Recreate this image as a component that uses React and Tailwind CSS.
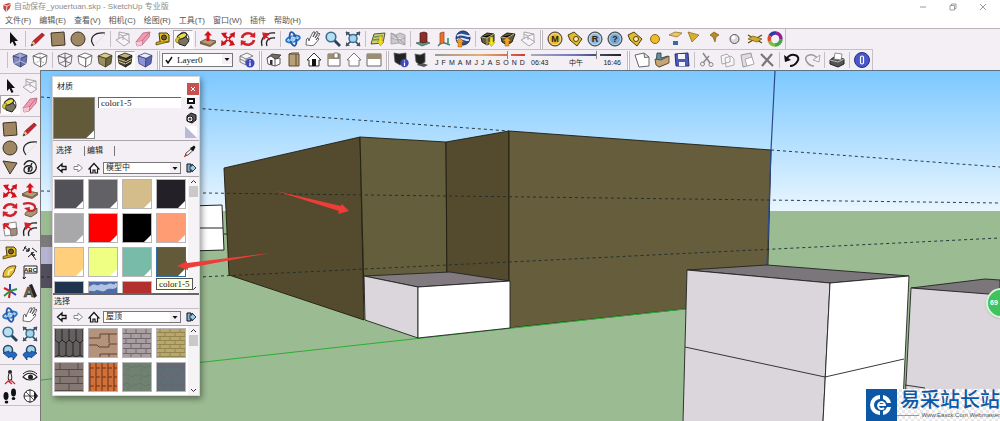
import React, { useState } from 'react';

const cube = (top, left, right, stroke = '#444') => (
  <g stroke={stroke} strokeWidth="0.8" strokeLinejoin="round">
    <path d="M3 6L10 3L17 5.500L11 8.500Z" fill={top} />
    <path d="M3 6L11 8.500L10.500 17L4 13.500Z" fill={left} />
    <path d="M11 8.500L17 5.500L16 13.500L10.500 17Z" fill={right} />
  </g>
);

const coin = (fill, letter) => (
  <>
    <circle cx="10" cy="10" r="7" fill={fill} stroke="#3b3a35" />
    <circle cx="10" cy="10" r="5.500" fill="none" stroke="#fff" strokeOpacity="0.5" />
    <text x="10" y="13" textAnchor="middle" fontSize="9" fontWeight="bold" fill="#2a2410">{letter}</text>
  </>
);

const icons = {
  select: <path d="M7 3V15L9.500 12.500L11.500 17L13.500 16L11.500 12H15Z" fill="#111" />,
  pencil: (
    <>
      <path d="M3 17L5 12L14 4L16.500 6L7.500 15Z" fill="#c4242b" stroke="#6d1418" strokeWidth="0.6" />
      <path d="M3 17L5 12L7.500 15Z" fill="#e8c99a" />
      <path d="M3 17L4 14.700L5.300 16Z" fill="#111" />
    </>
  ),
  rect: <path d="M3 4L16 3L17 16L4 17Z" fill="#a08763" stroke="#3d3222" />,
  circle: <circle cx="10" cy="10" r="7" fill="#a08763" stroke="#3d3222" />,
  triangle: <path d="M3 4L17 6L10 17Z" fill="#a08763" stroke="#3d3222" />,
  arc: (
    <>
      <path d="M6 17C0 9 6 3 17 4" fill="none" stroke="#222" strokeWidth="1.200" />
      <path d="M6 17L17 5" stroke="#bbb" strokeDasharray="1 2" />
    </>
  ),
  freehand: <path d="M4 8C8 0 18 5 16 12C14 18 4 18 4 13C4 8 13 7 12 12C11 16 7 14 9 10M12 6L8 15" fill="none" stroke="#222" strokeWidth="1.300" />,
  component: (
    <g fill="#f6f4f6" stroke="#aaa5aa">
      <path d="M6 3L16 5V13L6 11Z" />
      <path d="M3 11L9 8L17 13L11 17Z" />
      <path d="M6 5L10 7L16 5M10 7V11" />
    </g>
  ),
  eraser: (
    <>
      <path d="M3 13L10 4L17 3L16 8L9 16L4 17Z" fill="#ef9bb0" stroke="#b5637c" strokeWidth="0.8" />
      <path d="M3 13L9 12L16 3.500M9 12V16" fill="none" stroke="#b5637c" strokeWidth="0.8" />
      <path d="M3 13L9 12V16L4 17Z" fill="#f8c6d2" />
    </>
  ),
  tape: (
    <>
      <path d="M6 4H14L16 6V13H7Z" fill="#e3bc25" stroke="#4c3d0c" />
      <circle cx="11" cy="8.500" r="2.500" fill="#6d5e32" stroke="#222" />
      <path d="M15 13L3 16V13.500L8 12" fill="#c9a41f" stroke="#4c3d0c" strokeWidth="0.7" />
    </>
  ),
  paint: (
    <>
      <path d="M5 9L11 5L16 12L12 17L6 15Z" fill="#77755e" stroke="#222" />
      <ellipse cx="9" cy="7" rx="5" ry="2.500" transform="rotate(-25 9 7)" fill="#e9dc4e" stroke="#222" />
      <path d="M5 8C2 9 2 13 4 14C6 14 5 11 7 9Z" fill="#d8c92a" stroke="#5b5414" strokeWidth="0.6" />
      <path d="M7 5C10 1 16 4 16 11" fill="none" stroke="#333" />
    </>
  ),
  pushpull: (
    <>
      <path d="M2 13L8 10L18 12L12 16.500Z" fill="#b69a71" stroke="#3d3222" strokeWidth="0.7" />
      <path d="M2 13L12 16.500V18L2 15ZM12 16.500L18 12V14L12 18Z" fill="#7b6544" />
      <path d="M10 2L14 6.500H11.500V12H8.500V6.500H6Z" fill="#d8121b" />
    </>
  ),
  move: (
    <>
      <path d="M5 5L15 15M15.500 5L5 15" stroke="#d0121b" strokeWidth="2.400" />
      <path d="M3 4L9 3.500L6.500 9ZM17 3L16.500 9L11.500 5ZM17 16L11 17L14 11ZM3 17L3.500 11L8.500 15Z" fill="#d0121b" />
      <path d="M9 9L11 11M11 9L9 11" stroke="#f4dede" strokeWidth="0.8" />
    </>
  ),
  rotate: (
    <g fill="none" stroke="#d0222b" strokeWidth="2.600">
      <path d="M4 9C5 4 11 3 15 6" />
      <path d="M16 11C15 16 9 17 5 14" />
      <path d="M12 7.500L17 8.500V3.500ZM8 12.500L3 11.500V16.500Z" fill="#d0222b" strokeWidth="0.5" />
    </g>
  ),
  followme: (
    <>
      <path d="M5 15C5 10 9 12 14 11L17 8V13L11 17Z" fill="#a99674" stroke="#443a28" strokeWidth="0.7" />
      <path d="M3 4C10 2 16 4 15 9C13 12 9 11 8 9" fill="none" stroke="#d0222b" strokeWidth="2.200" />
      <path d="M4 8L10 7L9 12Z" fill="#d0222b" />
    </>
  ),
  scale: (
    <>
      <path d="M3 5L16 3L17 15L5 17Z" fill="#fff" stroke="#888" />
      <path d="M10 10L17 9V16L11 17Z" fill="#a08f74" stroke="#555" strokeWidth="0.7" />
      <path d="M10 10L4 5M4 5L9 5.500M4 5L4.500 10" stroke="#d0222b" strokeWidth="1.800" />
    </>
  ),
  offset: (
    <>
      <path d="M4 17C2 10 7 3 17 4" fill="none" stroke="#222" strokeWidth="1.300" />
      <path d="M9 17C7 12 11 8 17 9" fill="none" stroke="#222" strokeWidth="1.300" />
      <path d="M12 11L6 5M5 4L11 5L6 10Z" fill="#d0222b" stroke="#d0222b" strokeWidth="1.200" />
    </>
  ),
  orbit: (
    <>
      <ellipse cx="10" cy="10" rx="7" ry="3" fill="none" stroke="#2378c9" strokeWidth="2" transform="rotate(-15 10 10)" />
      <ellipse cx="10" cy="10" rx="3" ry="7" fill="none" stroke="#2b56a2" strokeWidth="1.800" transform="rotate(-15 10 10)" />
      <path d="M9 6L10 14M5 12L15 8" stroke="#8cc8f2" strokeWidth="1.400" />
    </>
  ),
  pan: <path d="M3 16C7 16 9 18 12 15L16 10L15 9L13 11L17 5L16 4L12 9L15 3L13.500 2.500L10 8L12 3L10 3L7 9L6 12L5 9L3.500 10Z" fill="#fff" stroke="#444" strokeWidth="0.8" />,
  zoom: (
    <>
      <path d="M11 11L17 17" stroke="#26435c" strokeWidth="2.800" />
      <circle cx="8" cy="8" r="4.800" fill="#b8def0" stroke="#3a6f90" strokeWidth="1.600" />
    </>
  ),
  zoomExtents: (
    <>
      <path d="M3 3L8 7M17 3L12 7M3 17L8 12M17 17L12 12" stroke="#334c5c" strokeWidth="1.700" />
      <path d="M3 3H7L3 7ZM17 3H13L17 7ZM3 17H7L3 13ZM17 17H13L17 13Z" fill="#445864" />
      <circle cx="10" cy="9.500" r="4" fill="#a5d4eb" stroke="#3a6f90" strokeWidth="1.500" />
    </>
  ),
  zoomPrev: (
    <>
      <circle cx="8" cy="7" r="4.500" fill="#a5d4eb" stroke="#25496b" strokeWidth="1.500" />
      <path d="M3 10L9 8V10C13 8 16 9 17 12L13 17V14H9L9 15Z" fill="#2268c5" stroke="#123766" strokeWidth="0.7" />
    </>
  ),
  zoomNext: (
    <>
      <circle cx="11" cy="7" r="4.500" fill="#a5d4eb" stroke="#25496b" strokeWidth="1.500" />
      <path d="M17 10L11 8V10C7 8 4 9 3 12L7 17V14H11V15Z" fill="#2268c5" stroke="#123766" strokeWidth="0.7" />
    </>
  ),
  map: (
    <>
      <path d="M3 15L6 5L17 4L15 14Z" fill="#d4cf72" stroke="#565339" />
      <path d="M6 8L15 7M5 11L14 10" stroke="#669558" strokeWidth="1.500" />
      <path d="M11 7H14V12H16L12.500 17L9 12H11Z" fill="#f4dc19" stroke="#9d8a12" strokeWidth="0.5" />
    </>
  ),
  terrain: <path d="M3 4L8 6L12 4L17 6V16L11 14L3 15Z M3 9L10 11L17 9M8 6L11 14M3 4L17 15" fill="#ccc9cc" stroke="#999" strokeWidth="0.8" />,
  building: (
    <>
      <path d="M3 14L12 12L17 14L9 17Z" fill="#5b9c85" stroke="#345b4c" strokeWidth="0.7" />
      <path d="M7 4L11 3L14 4V13L10 14L7 13Z" fill="#8f2d2b" stroke="#4e1717" strokeWidth="0.7" />
    </>
  ),
  placemark: (
    <>
      <path d="M5 17L9 13L17 16M15 9V15" stroke="#388f79" strokeWidth="1.600" fill="none" />
      <path d="M7 4L11 3V14L7 15Z" fill="#e8742a" stroke="#98401a" strokeWidth="0.7" />
    </>
  ),
  earth: (
    <>
      <circle cx="10" cy="9" r="7" fill="#284d93" stroke="#1b2c54" />
      <path d="M4 7C9 3 12 8 17 7M4 11C9 7 12 12 16 11" stroke="#dcebf8" fill="none" strokeWidth="1.800" />
      <path d="M7 9L11 13H9V18H5V13H3Z" fill="#ee9a26" stroke="#9f5a13" strokeWidth="0.5" />
    </>
  ),
  getModels: (
    <>
      <path d="M3 8L9 4L16 5V12L9 16L4 13Z" fill="#605c3c" stroke="#24210f" />
      <path d="M3 8L9 9L16 5M9 9V16" stroke="#c1b77b" />
      <path d="M12 8H15V13H17L13.500 17.500L10 13H12Z" fill="#f4e219" stroke="#8a7c12" strokeWidth="0.5" />
    </>
  ),
  shareModel: (
    <>
      <path d="M3 8L9 4L17 5L14 13L9 16L4 13Z" fill="#605c3c" stroke="#24210f" />
      <path d="M3 8L9 9L16 5" stroke="#c1b77b" />
      <path d="M9 8L13 12H11V17H7V12H5Z" fill="#efa32a" stroke="#8e5610" strokeWidth="0.5" />
    </>
  ),
  coinM: coin('#e9b52c', 'M'),
  coinR: coin('#8fb5da', 'R'),
  coinHelp: coin('#76a4d0', '?'),
  tag: (
    <>
      <path d="M3 6L9 3L17 10L12 17L5 11Z" fill="#e3bb32" stroke="#4e3e0c" />
      <circle cx="11" cy="10" r="2.500" fill="#fff4b8" stroke="#4e3e0c" />
    </>
  ),
  ball: <circle cx="10" cy="10" r="4.500" fill="#efba2e" stroke="#8c6812" />,
  plane: (
    <>
      <path d="M4 6L10 3L17 4L12 8Z" fill="#e8c968" stroke="#86651a" strokeWidth="0.7" />
      <path d="M8 12H13V16H8Z" fill="#376c9f" />
    </>
  ),
  spot: <path d="M3 3L14 6L7 13Z" fill="#d8ae2c" stroke="#86651a" strokeWidth="0.7" />,
  ies: <path d="M5 6L9 3L14 6L11 8L10 13L8 8Z" fill="#b98926" stroke="#7d5b15" strokeWidth="0.7" />,
  sphere: (
    <>
      <circle cx="9.500" cy="10" r="4.500" fill="#d9d7d9" stroke="#555" />
      <circle cx="8.500" cy="8.500" r="2" fill="#fff" />
    </>
  ),
  infinite: (
    <>
      <path d="M3 6L8 9M17 6L12 9M3 14L8 11M17 14L12 11" stroke="#5e4c14" strokeWidth="1.400" />
      <path d="M3 10L8 7L17 10L12 13Z" fill="#d6a92a" stroke="#6d5411" strokeWidth="0.7" />
    </>
  ),
  swirl: (
    <g fill="none" strokeWidth="3.600">
      <path d="M5 7A6 6 0 0 1 11 4" stroke="#2b3aa8" />
      <path d="M11 4A6 6 0 0 1 16 10" stroke="#8b2396" />
      <path d="M16 10A6 6 0 0 1 10 16" stroke="#3cab43" />
      <path d="M10 16A6 6 0 0 1 4.500 12" stroke="#7cc043" />
      <path d="M4.500 12A6 6 0 0 1 5 7" stroke="#e7412f" />
    </g>
  ),
  xray: (
    <>
      {cube('#9aa0d0', '#8088bf', '#6b74b3', '#3b4170')}
      <path d="M10 3V11M4 13.500L10 11L16 13.500" stroke="#c9cdee" fill="none" strokeWidth="0.8" />
    </>
  ),
  backEdges: (
    <>
      {cube('#fff', '#fff', '#fff', '#555')}
      <path d="M10 3V11M4 13.500L10 11L16 13.500" stroke="#888" fill="none" strokeWidth="0.7" strokeDasharray="2 1" />
    </>
  ),
  wire: (
    <>
      {cube('#f4f0f4', '#f4f0f4', '#f4f0f4', '#555')}
      <path d="M10 3V11M4 13.500L10 11L16 13.500" stroke="#555" fill="none" strokeWidth="0.8" />
    </>
  ),
  hidden: cube('#fff', '#fff', '#fff', '#555'),
  shaded: cube('#d8cb8a', '#9a8f60', '#6d6440', '#3f3a24'),
  textured: (
    <>
      {cube('#bfb27b', '#4d4630', '#332e1e', '#1d1a10')}
      <path d="M3.500 9L11 11.500L16.500 8.500M4 11.500L10.500 14L16 11" stroke="#d6cb98" fill="none" />
    </>
  ),
  mono: cube('#e9ebff', '#8b95d6', '#5b66b5', '#3b4170'),
  layerInfo: (
    <>
      <path d="M3 6L10 3L16 6L9 9Z" fill="#f5f5f5" stroke="#666" strokeWidth="0.8" />
      <path d="M3 6V9L9 12V9M3 9V12L9 15V12" fill="none" stroke="#666" strokeWidth="0.8" />
      <circle cx="13" cy="13" r="4.500" fill="#3b49bd" />
      <path d="M13 10.200V11.500M13 12.500V16" stroke="#fff" strokeWidth="1.400" />
    </>
  ),
  isoHouse: (
    <>
      <path d="M3 8L8 4L17 5L13 9Z" fill="#77695c" stroke="#333" strokeWidth="0.8" />
      <path d="M3 8L7 6L11 9V16L4 14ZM11 9L16 8V14L11 16" fill="#fff" stroke="#333" strokeWidth="0.8" />
      <path d="M6 10H8.500V15L6 14.500Z" fill="#333" />
    </>
  ),
  topHouse: (
    <>
      <path d="M5 4H15V16H5Z" fill="#b79f76" stroke="#5a4c33" />
      <path d="M12 4V16M5 4L8 3H15" stroke="#5a4c33" fill="none" />
    </>
  ),
  frontHouse: (
    <>
      <path d="M3 10L10 3L17 10H15V16H5V10Z" fill="#fff" stroke="#333" />
      <path d="M8 9H12V16H8Z" fill="#111" />
    </>
  ),
  rightHouse: (
    <>
      <path d="M4 4H16V16H4Z" fill="#fff" stroke="#666" />
      <path d="M4 4H16V9H4Z" fill="#9c8e75" />
      <path d="M10 3H14V8H10Z" fill="#fff" stroke="#666" strokeWidth="0.8" />
    </>
  ),
  backHouse: <path d="M3 10L10 3L17 10H15V16H5V10Z" fill="#fff" stroke="#777" />,
  leftHouse: (
    <>
      <path d="M3 4H17V16H3Z" fill="#fff" stroke="#666" />
      <path d="M3 4H17V9H3Z" fill="#9c8e75" />
    </>
  ),
  shadowInfo: (
    <>
      <path d="M3 3L8 4L15 3V12L9 15L4 12Z" fill="#222" stroke="#555" strokeWidth="0.8" />
      <circle cx="13.500" cy="13" r="4.200" fill="#3b49bd" />
      <path d="M13.500 10.500V11.500M13.500 12.500V16" stroke="#fff" strokeWidth="1.200" />
    </>
  ),
  shadow: (
    <>
      <path d="M9 12L17 15L13 17L6 15Z" fill="#555" />
      <path d="M4 4L9 5L14 3V12L9 15L5 12Z" fill="#222" stroke="#666" strokeWidth="0.8" />
    </>
  ),
  newFile: <path d="M3 5L12 3L17 7V16L7 17Z M12 3L12.500 7.500L17 7" fill="#fff" stroke="#666" />,
  open: (
    <>
      <path d="M5 3H9V8L16 6V13L7 17L4 13Z" fill="#5b93a8" stroke="#333" strokeWidth="0.8" />
      <path d="M3 9L9 10L17 6V13L7 17L4 15Z" fill="#c4a577" stroke="#4c3c20" strokeWidth="0.8" />
    </>
  ),
  save: (
    <>
      <path d="M3 4L16 3L17 16H4Z" fill="#4e59ba" stroke="#272f70" />
      <path d="M6 4H13V9H6ZM7 12H13V16H7Z" fill="#f4f4fa" />
    </>
  ),
  cut: (
    <g fill="none" stroke="#8b888b">
      <path d="M6 3L13 13M12 6L6 13" strokeWidth="1.500" />
      <circle cx="5.500" cy="14" r="2" />
      <circle cx="14" cy="14.500" r="2" />
    </g>
  ),
  copy: <path d="M4 6L10 4L13 7V12L5 14ZM8 8L14 6L17 9V15L9 17Z" fill="#f8f6f8" stroke="#aaa" />,
  paste: (
    <>
      <path d="M4 5L14 3L16 14L6 17Z" fill="#e0dde0" stroke="#999" />
      <path d="M8 9L15 7L17 14L10 16Z" fill="#fff" stroke="#aaa" />
    </>
  ),
  remove: <path d="M4 4L16 16M15 4L5 16" stroke="#777" strokeWidth="2.200" />,
  undo: (
    <>
      <path d="M4 9C10 1 20 6 15 12C13 15 10 16 8 16" fill="none" stroke="#111" strokeWidth="2" />
      <path d="M2 5L3 12L9 10Z" fill="#111" />
    </>
  ),
  redo: (
    <>
      <path d="M16 9C10 1 0 6 5 12C7 15 10 16 12 16" fill="none" stroke="#999" strokeWidth="1.500" />
      <path d="M18 5L17 12L11 10Z" fill="#f4f4f4" stroke="#999" strokeWidth="0.8" />
    </>
  ),
  print: (
    <>
      <path d="M3 10L7 7L17 9V14L11 17L3 14Z" fill="#555" stroke="#222" />
      <path d="M8 3L15 4L14 10L7 9Z" fill="#fff" stroke="#777" strokeWidth="0.8" />
      <path d="M3 10L11 12L17 9" stroke="#bbb" fill="none" />
    </>
  ),
  info: (
    <>
      <circle cx="10" cy="10" r="7.500" fill="#4a57c8" stroke="#252e80" />
      <rect x="8.500" y="6" width="3" height="8" rx="1.500" fill="none" stroke="#fff" strokeWidth="1.200" />
    </>
  ),
  dimension: (
    <g stroke="#222" fill="none">
      <path d="M4 4L9 8M12 5L17 9M6 3L3 8M11 10L16 17M8 14L14 9" />
      <path d="M9 8V5M9 8H6M12 12V9M12 12H15" strokeWidth="1.500" />
    </g>
  ),
  protractor: (
    <>
      <path d="M3 15C3 7 9 3 16 4L14 10L10 15Z" fill="#e6bd35" stroke="#5e4b12" />
      <path d="M8 13L9 9L13 7" stroke="#fff3b0" fill="none" strokeWidth="1.500" />
    </>
  ),
  textLabel: (
    <>
      <path d="M4 4H17V11H4Z" fill="#fff" stroke="#222" />
      <path d="M4 11V17M3 15L4 17L6 15" stroke="#222" fill="none" />
      <text x="10.500" y="10" textAnchor="middle" fontSize="6" fontWeight="bold" fill="#111">ABC</text>
    </>
  ),
  axes: (
    <g fill="none" strokeWidth="2">
      <path d="M10 10V3M10 10L16 14" stroke="#2340b4" />
      <path d="M10 10L4 7M10 10L9 17" stroke="#c8232b" />
      <path d="M10 10L4 15M10 10L17 8" stroke="#2b9440" />
    </g>
  ),
  text3d: (
    <>
      <path d="M9 4L12 3L17 15L14 17Z" fill="#222" />
      <text x="9" y="16" textAnchor="middle" fontSize="15" fontWeight="bold" fill="#7b705a" stroke="#222" strokeWidth="0.6">A</text>
    </>
  ),
  camera: (
    <>
      <circle cx="10" cy="5" r="2" fill="#222" />
      <path d="M10 5C8 8 8 10 8.500 13H11.500C12 10 12 8 10 5Z" fill="#eee" stroke="#222" />
      <path d="M5 17L8 14H12L15 17M8 14L12 17" stroke="#c8232b" fill="none" strokeWidth="1.200" />
    </>
  ),
  look: (
    <>
      <path d="M3 10C7 5 13 5 17 10C13 14 7 14 3 10Z" fill="#fff" stroke="#222" strokeWidth="1.200" />
      <circle cx="10.500" cy="10" r="2.500" fill="#222" />
      <path d="M3 7C7 3 13 3 17 7" stroke="#222" fill="none" />
    </>
  ),
  walk: (
    <g fill="#111">
      <ellipse cx="6" cy="10" rx="2.500" ry="4" />
      <ellipse cx="6.500" cy="16" rx="1.800" ry="1.600" />
      <ellipse cx="13.500" cy="6.500" rx="2.500" ry="4" />
      <ellipse cx="13.500" cy="12.500" rx="1.800" ry="1.600" />
    </g>
  ),
  section: (
    <>
      <circle cx="10" cy="10" r="6" fill="#fff" stroke="#222" />
      <path d="M4 10H16M10 3V17M6 6L14 14" stroke="#222" strokeWidth="0.8" />
      <path d="M14 5L18 10L14 15Z" fill="#222" />
    </>
  ),
};

const Icon = ({ name }) => (
  <svg viewBox="0 0 20 20" className="h-5 w-5 shrink-0" style={{ fontFamily: '"Liberation Sans", sans-serif' }} aria-hidden="true">
    {icons[name]}
  </svg>
);

const ToolButton = ({ name, label, active }) => (
  <button
    type="button"
    aria-label={label}
    className={`flex h-[19px] w-5 shrink-0 items-center justify-center ${active ? 'border border-[#aaa6aa] border-r-white border-b-white bg-[#fbf9fb]' : ''}`}
  >
    <Icon name={name} />
  </button>
);

const Tools = ({ items, active }) => (
  <div className="flex shrink-0">
    {items.map(([name, label]) => (
      <ToolButton key={label} name={name} label={label} active={active === name} />
    ))}
  </div>
);

const Divider = () => <div className="mx-0.5 h-4 w-px shrink-0 bg-[#c4c0c4]" />;
const Grip = () => <div className="mx-0.5 h-[19px] w-[3px] shrink-0 border-x border-[#bdb9bd] bg-white" />;

const topRow = [
  [['select', '选择']],
  [['pencil', '线条'], ['rect', '矩形'], ['circle', '圆'], ['arc', '圆弧']],
  [['component', '制作组件'], ['eraser', '擦除'], ['tape', '卷尺'], ['paint', '颜料桶']],
  [['pushpull', '推拉'], ['move', '移动'], ['rotate', '旋转'], ['offset', '偏移']],
  [['orbit', '环绕'], ['pan', '平移'], ['zoom', '缩放'], ['zoomExtents', '缩放范围']],
  [['map', '添加位置'], ['terrain', '切换地形']],
  [['building', '添加建筑'], ['placemark', '照片纹理'], ['earth', '预览模型']],
  [['getModels', '获取模型'], ['shareModel', '共享模型'], ['component', '共享组件']],
];

const vrayTools = [
  ['coinM', '材质编辑器'], ['tag', '选项'], ['coinR', '渲染'], ['coinHelp', '帮助'],
  ['tag', '帧缓冲'], ['ball', '泛光灯'], ['plane', '面光源'], ['spot', '聚光灯'],
  ['ies', '光域网'], ['sphere', '球体'], ['infinite', '无限平面'], ['swirl', '色轮'],
];

const sideTools = [
  [['select', '选择'], ['component', '制作组件'], ['paint', '颜料桶'], ['eraser', '擦除']],
  [['rect', '矩形'], ['pencil', '线条'], ['circle', '圆'], ['arc', '圆弧'], ['triangle', '多边形'], ['freehand', '徒手画']],
  [['move', '移动'], ['pushpull', '推拉'], ['rotate', '旋转'], ['followme', '跟随路径'], ['scale', '拉伸'], ['offset', '偏移']],
  [['tape', '卷尺'], ['dimension', '尺寸'], ['protractor', '量角器'], ['textLabel', '文本'], ['axes', '轴'], ['text3d', '三维文本']],
  [['orbit', '环绕'], ['pan', '平移'], ['zoom', '缩放'], ['zoomExtents', '缩放范围'], ['zoomPrev', '上一个'], ['zoomNext', '下一个']],
  [['camera', '定位镜头'], ['look', '正面观察'], ['walk', '漫游'], ['section', '截平面']],
];

const menus = ['文件(F)', '编辑(E)', '查看(V)', '相机(C)', '绘图(R)', '工具(T)', '窗口(W)', '插件', '帮助(H)'];

const TitleBar = () => (
  <div className="flex h-[14px] items-center bg-white pl-0.5 pr-3 text-[8px] leading-[14px] text-[#8c8c8c]">
    <svg viewBox="0 0 10 12" className="mr-0.5 h-[11px] w-[10px]" aria-hidden="true">
      <path d="M1 3L7 1L9.500 2L8 7L4 11L3 8L1 7Z" fill="#c4473c" />
      <path d="M1 3L5 4.500L9.500 2M5 4.500L4 11" stroke="#fff" strokeWidth="0.8" fill="none" />
      <path d="M1 7L3 8L4 11Z" fill="#5c2722" />
    </svg>
    <h1 className="flex-1 truncate">自动保存_youertuan.skp - SketchUp 专业版</h1>
    <div className="flex gap-5">
      <button type="button" aria-label="最小化">
        <svg viewBox="0 0 10 10" className="h-[10px] w-[10px]"><path d="M2 5H8" stroke="#999" /></svg>
      </button>
      <button type="button" aria-label="还原">
        <svg viewBox="0 0 10 10" className="h-[10px] w-[10px]"><path d="M2 3.500H6.500V8H2ZM3.500 3.500V2H8V6.500H6.500" fill="none" stroke="#888" strokeWidth="0.8" /></svg>
      </button>
      <button type="button" aria-label="关闭">
        <svg viewBox="0 0 10 10" className="h-[10px] w-[10px]"><path d="M2 2L8 8M8 2L2 8" stroke="#888" strokeWidth="0.8" /></svg>
      </button>
    </div>
  </div>
);

const thumb =
  'h-0.5 w-full appearance-none [&::-webkit-slider-thumb]:h-2 [&::-webkit-slider-thumb]:w-1 [&::-webkit-slider-thumb]:appearance-none [&::-webkit-slider-thumb]:border-l [&::-webkit-slider-thumb]:border-[#888] [&::-webkit-slider-thumb]:bg-[#f3eff4]';

const ShadowSliders = () => (
  <div className="flex shrink-0 gap-1.5 px-1 text-[7px] leading-[8px] text-[#222]">
    <label className="flex w-[90px] flex-col gap-px">
      <input type="range" aria-label="日期" defaultValue="84" className={`${thumb} bg-linear-to-r from-[#999] via-[#e0b070] to-[#d03a30]`} />
      <span className="flex justify-between pt-0.5">
        {'JFMAMJJASOND'.split('').map((m, i) => <span key={i}>{m}</span>)}
      </span>
    </label>
    <label className="flex w-[90px] flex-col gap-px">
      <input type="range" aria-label="时间" defaultValue="75" className={`${thumb} bg-linear-to-r from-[#aab] via-[#6a76b8] to-[#222]`} />
      <span className="flex justify-between pt-0.5">
        <span>06:43</span><span>中午</span><span>16:46</span>
      </span>
    </label>
  </div>
);

const DropArrow = () => (
  <svg viewBox="0 0 10 10" className="pointer-events-none absolute right-px top-px h-[10px] w-[10px]" aria-hidden="true">
    <path d="M0 0H10V10H0Z" fill="#f3eff4" />
    <path d="M2.500 4H7.500L5 7Z" fill="#111" />
  </svg>
);

const Toolbars = () => (
  <div className="bg-[#f3eff4]">
    <div className="flex h-[21px] items-center border-t border-[#b9b5b9]">
      <div className="flex h-full items-center border-r border-[#c4c0c4] pl-[3px]">
        {topRow.map((group, i) => (
          <React.Fragment key={i}>
            {i > 0 && <Divider />}
            <Tools items={group} active={i === 2 ? 'paint' : ''} />
          </React.Fragment>
        ))}
        <Grip />
        <Tools items={vrayTools} />
      </div>
    </div>
    <div className="flex h-[21px] items-center">
      <div className="flex h-full items-center border-t border-r border-[#c4c0c4] pl-[5px]">
        <Divider />
        <Tools items={[['xray', 'X 射线'], ['backEdges', '后边线']]} />
        <Divider />
        <Tools
          items={[['wire', '线框'], ['hidden', '隐藏线'], ['shaded', '阴影'], ['textured', '阴影纹理'], ['mono', '单色']]}
          active="textured"
        />
        <Grip />
        <div className="relative shrink-0">
          <select aria-label="图层" className="block h-[14px] w-[71px] appearance-none border border-[#777] bg-white pl-[14px] font-['Liberation_Serif',serif] text-[9px] leading-[12px] text-[#111]">
            <option>Layer0</option>
          </select>
          <svg viewBox="0 0 10 10" className="pointer-events-none absolute left-0.5 top-0.5 h-[10px] w-[10px]" aria-hidden="true">
            <path d="M2 5L4 8L8 2" fill="none" stroke="#111" strokeWidth="1.500" />
          </svg>
          <DropArrow />
        </div>
        <div className="w-1" />
        <Tools items={[['layerInfo', '图层管理器']]} />
        <Grip />
        <Tools
          items={[['isoHouse', '等轴'], ['topHouse', '俯视图'], ['frontHouse', '主视图'], ['rightHouse', '右视图'], ['backHouse', '后视图'], ['leftHouse', '左视图']]}
        />
        <Grip />
        <Tools items={[['shadowInfo', '阴影设置'], ['shadow', '显示阴影']]} />
        <ShadowSliders />
        <Grip />
        <Tools items={[['newFile', '新建'], ['open', '打开'], ['save', '保存']]} />
        <Divider />
        <Tools items={[['cut', '剪切'], ['copy', '复制'], ['paste', '粘贴'], ['remove', '删除']]} />
        <Divider />
        <Tools items={[['undo', '撤销'], ['redo', '重做']]} />
        <Divider />
        <Tools items={[['print', '打印']]} />
        <Divider />
        <Tools items={[['info', '模型信息']]} />
      </div>
    </div>
  </div>
);

const SideBar = () => (
  <aside className="w-[41px] shrink-0 border-r border-[#777] bg-[#f3eff4] pt-[3px]">
    <div className="border-y border-[#c4c0c4] pt-0.5">
      {sideTools.map((group, i) => (
        <div key={i} className={i > 0 ? 'mt-0.5 border-t border-[#c4c0c4] pt-0.5' : ''}>
          <div className="grid grid-cols-2">
            {group.map(([name, label]) => (
              <ToolButton key={label} name={name} label={label} active={i === 0 && name === 'paint'} />
            ))}
          </div>
        </div>
      ))}
    </div>
  </aside>
);

const Scene = () => (
  <svg viewBox="41 71 959 350" preserveAspectRatio="xMinYMin slice" className="absolute inset-0 h-full w-full" aria-hidden="true">
    <defs>
      <linearGradient id="sky" x1="0" y1="0" x2="0" y2="1">
        <stop offset="0" stopColor="#7cc8ff" />
        <stop offset="1" stopColor="#e9f6ff" />
      </linearGradient>
    </defs>
    <rect x="41" y="71" width="959" height="140" fill="url(#sky)" />
    <rect x="41" y="211" width="959" height="210" fill="#9bbb92" />
    <rect x="41" y="235" width="12" height="12" fill="#7c7a7c" />
    <rect x="41" y="247" width="12" height="17" fill="#b4b4d2" />
    <rect x="41" y="264" width="12" height="24" fill="#524e5c" />
    <path d="M190 206L222 205L224 250L190 251Z M190 228H223" fill="#fff" stroke="#222" />
    <path d="M224 234H229" stroke="#222" />

    <g stroke="#1f1c12" strokeWidth="0.900" strokeLinejoin="round">
      <path d="M224 168L360 137L364 320L229 275Z" fill="#544b2f" />
      <path d="M360 137L446 142L447 290H364Z" fill="#655e3d" />
      <path d="M446 142L509 131V290H447Z" fill="#544b2f" />
      <path d="M509 131L771 150L767 300L509 328Z" fill="#665d3c" />
    </g>
    <path d="M41 380L685 309" stroke="#2cae32" />
    <g stroke="#222" strokeWidth="0.900" strokeLinejoin="round">
      <path d="M364 276L450 272L510 281L418 287Z" fill="#817b80" />
      <path d="M364 276L418 287V338L365 320Z" fill="#dad6db" />
      <path d="M418 287L510 281V328L418 338Z" fill="#fff" />
    </g>
    <path d="M775 71L771 150L767 266" stroke="#2a4a8c" strokeWidth="1.200" fill="none" />
    <g stroke="#1c2a30" strokeWidth="0.900" strokeDasharray="3 3" fill="none">
      <path d="M41 97L509 131M771 150L1000 167" />
      <path d="M41 191L530 197L1000 203" />
      <path d="M41 277H200L530 261L1000 238" />
    </g>

    <g stroke="#222" strokeWidth="0.900" strokeLinejoin="round">
      <path d="M911 288L985 279L1000 280V296Z" fill="#7a767a" />
      <path d="M911 288L1001 295V422H904Z" fill="#dad6dc" />
      <path d="M905 385L925 388" />
      <path d="M687 270L767 265L909 276L830 283Z" fill="#7a767a" />
      <path d="M687 270L830 283L823 422H683Z" fill="#dad6dc" />
      <path d="M830 283L909 276L902 422H823Z" fill="#fff" />
      <path d="M685 347L825 377L904 359" fill="none" />
    </g>
  </svg>
);

// red pointers drawn over both the scene and the palette
const Pointers = () => (
  <svg viewBox="41 71 959 350" preserveAspectRatio="xMinYMin slice" className="pointer-events-none absolute inset-0 h-full w-full" aria-hidden="true">
    <g fill="#ee3c38">
      <path d="M276 191L341 206L342 204L349 211L338 214L339 211Z" />
      <path d="M270 253L187 263L187 261L177 266L188 270L188 268Z" />
    </g>
  </svg>
);

const materials = [
  '#525157', '#626165', '#d4bd8b', '#232127',
  '#a8a7a9', '#ff0000', '#000000', '#ff9c73',
  '#ffcf7b', '#efff84', '#77bba8', '#625a39',
  '#20344f', 'sky', '#b3302f',
];

const textures = [
  { id: 'slate', bg: '#656060', w: 14, h: 28, line: '#242222', d: 'M0 0V11L4 14L7 11V0M7 11L11 14L14 11V0M4 14V26M11 14V26M0 28L4 26L7 28L11 26L14 28' },
  { id: 'shake', bg: '#b5937b', w: 28, h: 20, line: '#5f4234', d: 'M0 9H11M11 5H28M11 5V9M0 16H8L10 18H20V15H28M20 5V14' },
  { id: 'shingleGray', bg: '#aa9fa0', w: 10, h: 10, line: '#6f666e', d: 'M0 4.500H10M0 9.500H10M3 0V4M8 5V9' },
  { id: 'shingleTan', bg: '#b8a86c', w: 10, h: 8, line: '#94854f', d: 'M0 3.500H10M0 7.500H10M3 0V3M8 4V7' },
  { id: 'roofBrown', bg: '#857771', w: 18, h: 14, line: '#544a48', d: 'M0 6.500H18M0 13.500H18M5 0V6M14 7V13' },
  { id: 'tile', bg: '#d0713a', w: 6, h: 9, line: '#6e2f18', d: 'M1 0V9M1 5H5' },
  { id: 'green', bg: '#70826f', w: 13, h: 9, line: '#65776a', d: 'M0 4L4 2L9 5L13 3M5 9V5' },
  { id: 'blue', bg: '#5f6d74', w: 9, h: 9, line: '#6b6070', d: 'M0 4H9M4 0V4M7 4V9' },
];

const Swatch = ({ color, selected }) => (
  <button
    type="button"
    aria-label={`材质 ${color}`}
    className={`h-[30px] w-[30px] border ${selected ? 'border-[#2f6fa8]' : 'border-[#b9b5b9]'}`}
  >
    <svg viewBox="0 0 28 28" className="h-full w-full" aria-hidden="true">
      {color === 'sky' ? (
        <>
          <rect width="28" height="28" fill="#4c6cab" />
          <path d="M0 5C6 0 6 4 10 3C13 0 15 5 19 2C22 0 25 4 28 1V5C24 9 21 5 17 8C13 12 9 6 6 9C4 10 2 8 0 9Z" fill="#b4c3e0" />
        </>
      ) : (
        <rect width="28" height="28" fill={color} />
      )}
      <path d="M28 21V28H21Z" fill="#fff" />
    </svg>
  </button>
);

const Texture = ({ id, bg, w, h, line, d }) => (
  <button type="button" aria-label={id} className="h-[30px] w-[30px] border border-[#b9b5b9]">
    <svg viewBox="0 0 28 28" className="h-full w-full" aria-hidden="true">
      <pattern id={id} width={w} height={h} patternUnits="userSpaceOnUse">
        <rect width={w} height={h} fill={bg} />
        <path d={d} stroke={line} fill="none" />
      </pattern>
      <rect width="28" height="28" fill={`url(#${id})`} />
    </svg>
  </button>
);

const ScrollBar = () => (
  <div className="flex w-[11px] shrink-0 flex-col items-center bg-[#f6f3f6]">
    <svg viewBox="0 0 9 9" className="h-[9px] w-[9px]" aria-hidden="true"><path d="M2 6L4.500 3.500L7 6" fill="none" stroke="#333" /></svg>
    <div className="h-[11px] w-[9px] bg-[#cbc8cb]" />
    <div className="flex-1" />
    <svg viewBox="0 0 9 9" className="h-[9px] w-[9px]" aria-hidden="true"><path d="M2 3L4.500 5.500L7 3" fill="none" stroke="#333" /></svg>
  </div>
);

const NavRow = ({ label, value }) => (
  <div className="flex h-[17px] items-center border-b border-[#aaa6aa] pl-[3px] pr-0.5">
    <button type="button" aria-label="后退">
      <svg viewBox="0 0 12 12" className="h-3 w-3"><path d="M6 2L1.500 6L6 10V7.500H10V4.500H6Z" fill="#fff" stroke="#111" strokeWidth="1.300" /></svg>
    </button>
    <button type="button" aria-label="前进" className="ml-1">
      <svg viewBox="0 0 12 12" className="h-3 w-3"><path d="M6 2L10.500 6L6 10V7.500H2V4.500H6Z" fill="#fff" stroke="#888" /></svg>
    </button>
    <button type="button" aria-label="模型中" className="ml-1">
      <svg viewBox="0 0 12 12" className="h-3 w-3"><path d="M1 7L6 1.500L11 7H9.500V11H7V8H5V11H2.500V7Z" fill="#fff" stroke="#111" strokeWidth="1.200" /></svg>
    </button>
    <div className="relative ml-[3px] flex-1">
      <select aria-label={label} className="block h-3 w-full appearance-none border border-[#777] bg-white pl-0.5 text-[8px] leading-[10px] text-[#222]">
        <option>{value}</option>
      </select>
      <DropArrow />
    </div>
    <button type="button" aria-label="详细信息" className="ml-1">
      <svg viewBox="0 0 12 12" className="h-3 w-3"><path d="M2 2H6V10H2Z" fill="#7fb4d8" stroke="#111" /><path d="M5 4H7V2L11 6L7 10V8H5Z" fill="#9ccbe6" stroke="#111" strokeWidth="0.8" /></svg>
    </button>
  </div>
);

const MaterialPanel = () => {
  const [name, setName] = useState('color1-5');

  return (
    <section className="relative w-[148px] border border-[#d8d4d8] bg-[#f3eff4] text-[8px] text-[#222] shadow-[2px_3px_6px_rgba(0,0,0,0.4)]">
      <div className="flex h-5 items-center justify-between bg-white pl-1">
        <h2>材质</h2>
        <button type="button" aria-label="关闭" className="mt-1 flex h-3 w-3 items-center justify-center bg-[#c75050]">
          <svg viewBox="0 0 6 6" className="h-[6px] w-[6px]"><path d="M1 1L5 5M5 1L1 5" stroke="#fff" /></svg>
        </button>
      </div>
      <div className="flex h-11 border-b border-[#aaa6aa]">
        <svg viewBox="0 0 42 42" className="h-[42px] w-[42px] border border-[#888]" aria-hidden="true">
          <rect width="42" height="42" fill="#625a39" />
          <path d="M42 34V42H34Z" fill="#fff" />
        </svg>
        <input
          aria-label="材质名称"
          value={name}
          onChange={(e) => setName(e.target.value)}
          className="ml-[3px] h-[11px] w-[83px] border-t border-l border-[#666] bg-white pl-0.5 font-['Liberation_Serif',serif] text-[9px] leading-[10px]"
        />
        <div className="ml-auto mr-0.5 flex flex-col justify-between pb-0.5">
          <button type="button" aria-label="显示辅助窗格">
            <svg viewBox="0 0 12 12" className="h-3 w-3"><path d="M2 1H10V7H2ZM6 8L9 11.500H3Z" fill="#111" /><path d="M4 3H8V5H4Z" fill="#fff" /></svg>
          </button>
          <button type="button" aria-label="创建材质">
            <svg viewBox="0 0 12 12" className="h-3 w-3"><path d="M2 4L6 1L11 3V8L7 11L2 9Z" fill="#555" stroke="#111" /><circle cx="5" cy="7" r="3" fill="#fff" stroke="#111" /><path d="M5 5.500V8.500M3.500 7H6.500" stroke="#111" /></svg>
          </button>
          <button type="button" aria-label="默认材质">
            <svg viewBox="0 0 12 12" className="h-3 w-3"><path d="M0 0H12V12H0Z" fill="#b8bad6" /><path d="M0 0H12V12Z" fill="#fff" /></svg>
          </button>
        </div>
      </div>
      <div className="flex h-[19px] items-center pl-[3px] pr-0.5">
        <button type="button" className="w-7 text-left">选择</button>
        <button type="button" className="w-[31px] border-x border-[#777] pl-0.5 text-left leading-[10px]">编辑</button>
        <button type="button" aria-label="样本颜料" className="ml-auto">
          <svg viewBox="0 0 14 14" className="h-[14px] w-[14px]"><path d="M2 12L3 9L8 5L9.500 7L5 11Z" fill="#eee" stroke="#333" strokeWidth="0.8" /><path d="M7 4L10 7.500L11 6L12.500 3L11 1.500L9 3Z" fill="#111" /><path d="M1 13L4 10.500" stroke="#c03030" /></svg>
        </button>
      </div>
      <NavRow label="材质库" value="模型中" />
      <div className="flex h-[116px]">
        <div className="flex-1 overflow-hidden bg-white pt-0.5 pl-px">
          <div className="grid grid-cols-[repeat(4,30px)] gap-1">
            {materials.map((color) => (
              <Swatch key={color} color={color} selected={color === '#625a39'} />
            ))}
          </div>
        </div>
        <ScrollBar />
      </div>
      <div role="tooltip" className="absolute left-[103px] top-[201px] border border-[#555] bg-[#ffffe1] px-0.5 font-['Liberation_Serif',serif] text-[9px] leading-[10px]">
        color1-5
      </div>
      <h3 className="flex h-4 items-center border-t-2 border-b border-t-[#666] border-b-[#c4c0c4] pl-px">选择</h3>
      <NavRow label="纹理库" value="屋顶" />
      <div className="flex h-[69px]">
        <div className="flex-1 overflow-hidden bg-white pt-0.5 pl-px">
          <div className="grid grid-cols-[repeat(4,30px)] gap-1">
            {textures.map((t) => (
              <Texture key={t.id} {...t} />
            ))}
          </div>
        </div>
        <ScrollBar />
      </div>
    </section>
  );
};

const Watermark = () => (
  <div className="absolute right-0 bottom-0 flex h-8 w-[134px] bg-[repeating-conic-gradient(#e9e7e9_0_25%,#fff_0_50%)] bg-size-[6px_6px]">
    <svg viewBox="0 0 31 32" className="h-8 w-[31px] shrink-0" aria-hidden="true">
      <rect width="31" height="32" fill="#0d57a7" />
      <path d="M14 6A10 10 0 0 0 14 26V22A6 6 0 0 1 14 10ZM17 6A10 10 0 0 1 25 14H21A6 6 0 0 0 17 10ZM17 26A10 10 0 0 0 25 18H21A6 6 0 0 1 17 22Z" fill="#fff" />
      <path d="M12 16H19A3.500 3.500 0 1 0 18 19" fill="none" stroke="#fff" strokeWidth="1.800" />
    </svg>
    <div className="flex flex-1 flex-col items-end overflow-hidden whitespace-nowrap">
      <span className="text-[20px] font-medium leading-[22px] text-[#0d57a7]">易采站长站</span>
      <span className="flex w-full items-center justify-end gap-0.5 text-[6px] leading-[8px] text-[#555]">
        <span className="h-px flex-1 bg-[#999]" />
        Www.Easck.Com Webmaster
      </span>
    </div>
  </div>
);

const App = () => (
  <div className="flex min-h-screen flex-col overflow-hidden bg-white font-['Liberation_Sans','Noto_Sans_CJK_SC',sans-serif]">
    <header>
      <TitleBar />
      <nav className="flex h-[14px] items-center gap-2 pl-[5px] text-[8px] leading-[14px] text-[#555]">
        {menus.map((menu) => (
          <button key={menu} type="button">{menu}</button>
        ))}
      </nav>
      <Toolbars />
    </header>
    <div className="flex flex-1">
      <SideBar />
      <main className="relative flex-1 overflow-hidden border-t border-[#5b7382] pt-[5px] pb-6 pl-[11px]">
        <Scene />
        <MaterialPanel />
        <Pointers />
        <div className="absolute top-[217px] -right-4 flex h-[30px] w-[30px] items-center rounded-full border-2 border-[#d9f3dc] bg-[#3fc45c] pl-0.5 text-[7px] font-bold text-white shadow">
          69
        </div>
        <Watermark />
      </main>
    </div>
  </div>
);

export default App;
